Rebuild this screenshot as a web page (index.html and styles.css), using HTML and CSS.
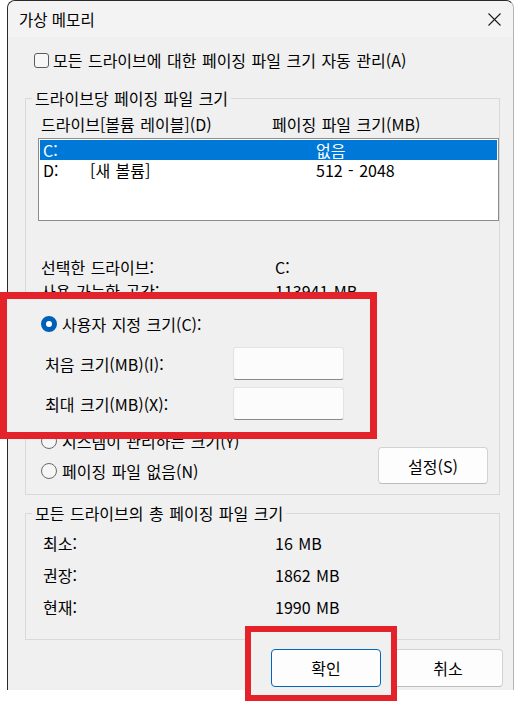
FILE: index.html
```html
<!DOCTYPE html>
<html lang="ko">
<head>
<meta charset="utf-8">
<title>가상 메모리</title>
<link rel="stylesheet" href="styles.css">
</head>
<body>
<div class="window">
  <div class="titlebar">
    <span class="title">가상 메모리</span>
    <svg class="close" width="13" height="13" viewBox="0 0 13 13" aria-label="닫기"><path d="M0.5 0.5 L12.5 12.5 M12.5 0.5 L0.5 12.5" stroke="#1b1b1b" stroke-width="1.1" fill="none"/></svg>
  </div>
  <div class="content">
    <div class="check-row"><span class="checkbox"></span><span>모든 드라이브에 대한 페이징 파일 크기 자동 관리(A)</span></div>

    <div class="group group-drive">
      <div class="group-title">드라이브당 페이징 파일 크기</div>
      <div class="head"><span class="hc1">드라이브[볼륨 레이블](D)</span><span>페이징 파일 크기(MB)</span></div>
      <div class="listbox">
        <div class="lrow selected"><span class="ld">C:</span><span class="lv"></span><span>없음</span></div>
        <div class="lrow"><span class="ld">D:</span><span class="lv">[새 볼륨]</span><span>512 - 2048</span></div>
      </div>
      <div class="info info-first"><span class="ik">선택한 드라이브:</span><span>C:</span></div>
      <div class="info"><span class="ik">사용 가능한 공간:</span><span>113941 MB</span></div>
      <div class="highlight hl-custom">
        <div class="radio-row"><span class="radio checked"></span><span>사용자 지정 크기(C):</span></div>
        <div class="field field-first"><span class="flabel">처음 크기(MB)(I):</span><span class="input"></span></div>
        <div class="field"><span class="flabel">최대 크기(MB)(X):</span><span class="input"></span></div>
      </div>
      <div class="options">
        <div class="radios">
          <div class="radio-row"><span class="radio"></span><span>시스템이 관리하는 크기(Y)</span></div>
          <div class="radio-row"><span class="radio"></span><span>페이징 파일 없음(N)</span></div>
        </div>
        <button class="btn btn-set">설정(S)</button>
      </div>
    </div>

    <div class="group group-total">
      <div class="group-title">모든 드라이브의 총 페이징 파일 크기</div>
      <div class="trow trow-first"><span class="tk">최소:</span><span>16 MB</span></div>
      <div class="trow"><span class="tk">권장:</span><span>1862 MB</span></div>
      <div class="trow"><span class="tk">현재:</span><span>1990 MB</span></div>
    </div>

    <div class="actions">
      <div class="highlight hl-ok"><button class="btn btn-primary">확인</button></div>
      <button class="btn btn-cancel">취소</button>
    </div>
  </div>
</div>
</body>
</html>
```

FILE: styles.css
```css
* { box-sizing: border-box; }

html, body {
  margin: 0;
  padding: 0;
  background: #ffffff;
}

html {
  height: 701px;
}

body {
  min-height: 701px;
  font-family: "Noto Sans CJK KR", "Noto Sans", sans-serif;
  font-size: 16px;
  word-spacing: 1px;
  color: #000000;
}

.window {
  margin-left: 7px;
  width: 507px;
  height: 690px;
  overflow: visible;
  background: #f0f0f0;
  border-top: 1px solid #2a2a2a;
  border-left: 1px solid #2a2a2a;
  border-right: 1px solid #b4b4b4;
  border-radius: 8px 8px 0 0;
}

.titlebar {
  height: 36px;
  display: flex;
  align-items: center;
  justify-content: space-between;
  padding-left: 11px;
  padding-right: 12px;
  background: #f3f3f3;
  border-radius: 8px 8px 0 0;
}

.title {
  font-size: 15.5px;
  word-spacing: 0;
  line-height: 20px;
}

.close {
  display: block;
}

.content {
  display: flex;
  flex-direction: column;
}

.check-row {
  margin-top: 11px;
  height: 24px;
  display: flex;
  align-items: center;
  padding-left: 26px;
  line-height: 24px;
}

.checkbox {
  width: 15px;
  height: 15px;
  border: 1px solid #5c5c5c;
  border-radius: 3px;
  background: #f7f7f7;
  margin-right: 4px;
}

.group {
  margin-left: 17px;
  width: 475px;
  border: 1px solid #d9d9d9;
}

.group-drive {
  margin-top: 26px;
  padding-bottom: 10px;
}

.group-total {
  margin-top: 18px;
  padding-bottom: 16px;
}

.group-title {
  display: table;
  margin-top: -11px;
  margin-left: 6px;
  padding: 0 3px;
  line-height: 20px;
  background: #f0f0f0;
}

.head {
  margin-top: 6px;
  display: flex;
  padding-left: 15px;
  line-height: 20px;
}

.hc1 { width: 231px; }

.listbox {
  margin-top: 4px;
  margin-left: 12px;
  height: 83px;
  border: 1px solid #8c8c8c;
  padding: 1px;
  background: #ffffff;
}

.lrow {
  height: 20px;
  line-height: 20px;
  display: flex;
  padding-left: 3px;
}

.lrow.selected {
  background: #0078d7;
  color: #ffffff;
}

.ld { width: 47px; }
.lv { width: 226px; }

.info {
  display: flex;
  padding-left: 15px;
  line-height: 24px;
}

.info-first { margin-top: 34px; }

.ik { width: 234px; }

.highlight {
  position: relative;
  background: #f0f0f0;
}

.hl-custom {
  margin-top: -11px;
  margin-left: -26px;
  width: 377px;
  border: 7px solid #e3222a;
  padding: 13px 0 12px 34px;
}

.radio-row {
  display: flex;
  align-items: center;
  line-height: 24px;
  height: 24px;
}

.radio {
  width: 16px;
  height: 16px;
  border-radius: 50%;
  border: 1px solid #6a6a6a;
  background: #f6f6f6;
  margin-right: 5px;
  flex: none;
}

.radio.checked {
  border: 5px solid #005fb8;
  background: #ffffff;
}

.field {
  display: flex;
  align-items: center;
  margin-left: 4px;
  margin-top: 7px;
  height: 33px;
}

.field-first { margin-top: 11px; }

.flabel { width: 188px; }

.input {
  width: 111px;
  height: 33px;
  background: #fcfcfc;
  border: 1px solid #e3e3e3;
  border-bottom-color: #8a8a8a;
  border-radius: 3px;
}

.options {
  margin-top: -10px;
  display: flex;
  align-items: flex-start;
  padding-left: 15px;
}

.radios {
  display: flex;
  flex-direction: column;
  gap: 6px;
}

.btn {
  font-family: inherit;
  font-size: 16px;
  word-spacing: inherit;
  color: #000000;
  background: #fdfdfd;
  border: 1px solid #d2d2d2;
  border-bottom-color: #bdbdbd;
  border-radius: 4px;
  padding: 0;
  width: 110px;
  line-height: 20px;
}

.btn-set {
  margin-left: auto;
  margin-right: 11px;
  margin-top: 18px;
  height: 37px;
}

.trow {
  display: flex;
  padding-left: 17px;
  line-height: 32px;
}

.trow-first { margin-top: 4px; }

.tk { width: 232px; }

.actions {
  margin-top: 9px;
  display: flex;
  justify-content: flex-end;
  align-items: flex-start;
  padding-right: 10px;
}

.hl-ok {
  margin-top: -23px;
  width: 152px;
  border: 6px solid #e3222a;
  padding: 17px 10px 8px 20px;
}

.btn-primary {
  height: 38px;
  border: 1px solid #0067c0;
  display: block;
}

.btn-cancel {
  height: 38px;
  margin-left: -4px;
}
```
